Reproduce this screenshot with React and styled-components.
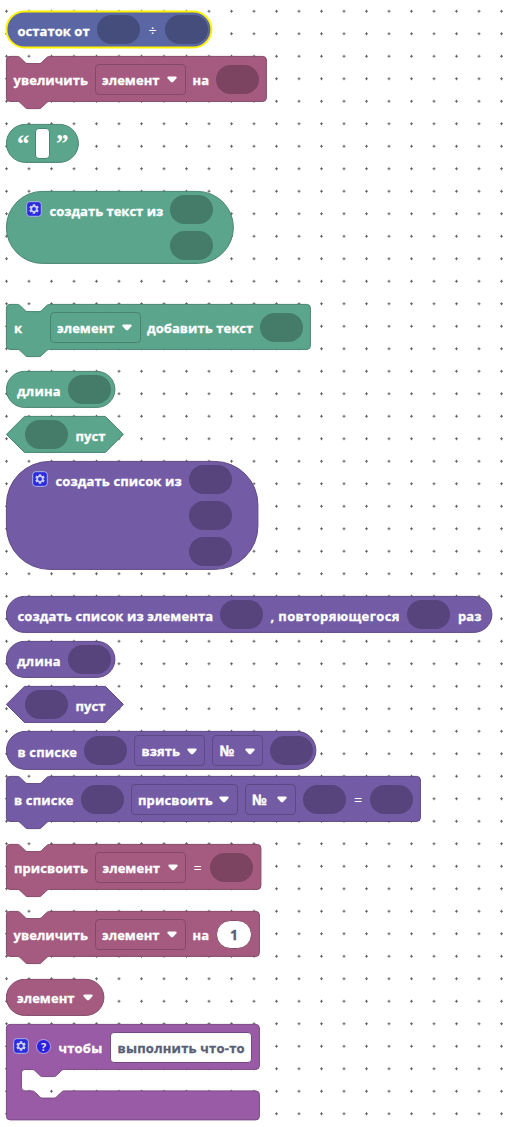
import React from "react";
import styled, { createGlobalStyle } from "styled-components";

const Global = createGlobalStyle`
  body { margin: 0; background: #fff; }
  * { box-sizing: border-box; }
`;

const PALETTE = {
  math: { fill: "#5b67a5", edge: "#fff200", socket: "#444d7c" },
  text: { fill: "#5ba58c", edge: "#498470", socket: "#447c69" },
  list: { fill: "#745ba5", edge: "#5d4984", socket: "#57447c" },
  vars: { fill: "#a55b80", edge: "#844966", socket: "#7c4460" },
  proc: { fill: "#995ba5", edge: "#7a4984", socket: "#73447c" },
};

const Workspace = styled.main`
  position: relative;
  width: 516px;
  height: 1127px;
  overflow: hidden;
  padding: 11px 0 0 6px;
  display: flex;
  flex-direction: column;
  align-items: flex-start;
  font-family: "Open Sans", "Noto Sans", sans-serif;
  font-weight: 700;
  font-size: 13px;
  color: #fff;
`;

const GridLayer = styled.svg`
  position: absolute;
  inset: 0;
  width: 100%;
  height: 100%;
`;

const BlockBox = styled.section`
  position: relative;
  flex: none;
  width: ${(p) => p.$w}px;
  height: ${(p) => p.$h}px;
  margin-bottom: ${(p) => p.$after}px;
`;

const Outline = styled.svg`
  position: absolute;
  left: 0;
  top: 0;
  width: 100%;
  height: 100%;
  overflow: visible;
`;

const Row = styled.div`
  position: relative;
  display: flex;
  align-items: center;
  height: ${(p) => p.$h}px;
  padding-left: ${(p) => p.$pad}px;
`;

const Label = styled.span`
  flex: none;
  width: ${(p) => p.$w}px;
  margin-left: ${(p) => p.$gap || 0}px;
  font-size: ${(p) => p.$size || 13}px;
  line-height: 20px;
  padding-top: ${(p) => p.$drop ?? 1}px;
  letter-spacing: ${(p) => p.$ls ?? 0.05}px;
  -webkit-text-stroke: 0.3px currentColor;
  white-space: pre;
`;

const Operator = styled.span`
  flex: none;
  width: ${(p) => p.$w}px;
  margin-left: ${(p) => p.$gap}px;
  padding-top: ${(p) => p.$drop ?? 2}px;
  font-size: 14.4px;
  font-weight: 500;
  line-height: 20px;
`;

const Socket = styled.span`
  flex: none;
  width: 43px;
  height: 29px;
  margin-left: ${(p) => p.$gap || 0}px;
  border-radius: 14.5px;
  background: ${(p) => p.$color};
`;

const SocketStack = styled.div`
  display: flex;
  flex-direction: column;
  align-self: flex-start;
  gap: 7px;
  padding-top: 4px;
  margin-left: 7px;
`;

const DropBox = styled.span`
  flex: none;
  display: flex;
  align-items: center;
  justify-content: space-between;
  width: ${(p) => p.$w}px;
  height: 31px;
  margin-left: ${(p) => p.$gap}px;
  padding: 0 7.5px 0 6.5px;
  border: 1px solid ${(p) => p.$edge};
  border-radius: 4px;
`;

const Arrow = styled.svg`
  flex: none;
  width: 10px;
  height: 7px;
  margin-top: ${(p) => p.$top ?? 1}px;
  margin-left: ${(p) => p.$gap || 0}px;
`;

const TextField = styled.span`
  flex: none;
  display: flex;
  align-items: center;
  width: ${(p) => p.$w}px;
  height: ${(p) => p.$h || 30}px;
  margin-left: ${(p) => p.$gap}px;
  padding-left: ${(p) => p.$pad || 0}px;
  border: 1px solid ${(p) => p.$edge};
  border-radius: ${(p) => p.$r || 4}px;
  background: #fff;
  color: #575e75;
`;

const Quote = styled.span`
  flex: none;
  width: 12px;
  height: 34px;
  margin-left: ${(p) => p.$gap || 0}px;
  font: 700 25px/34px "Liberation Serif", serif;
  text-align: center;
`;

const IconBox = styled.svg`
  flex: none;
  width: 16px;
  height: 16px;
  margin-left: ${(p) => p.$gap || 0}px;
  margin-bottom: ${(p) => p.$up ?? 0}px;
`;

const K = 3.6;
const NOTCH_R = "c1.8,0 2.7,.9 3.6,1.8 l3.6,3.6 c.9,.9 1.8,1.8 3.6,1.8 h10.8 c1.8,0 2.7,-.9 3.6,-1.8 l3.6,-3.6 c.9,-.9 1.8,-1.8 3.6,-1.8";
const NOTCH_L = "c-1.8,0 -2.7,.9 -3.6,1.8 l-3.6,3.6 c-.9,.9 -1.8,1.8 -3.6,1.8 h-10.8 c-1.8,0 -2.7,-.9 -3.6,-1.8 l-3.6,-3.6 c-.9,-.9 -1.8,-1.8 -3.6,-1.8";

const shapes = {
  round: (w, h) => {
    const r = Math.min(h / 2, 43.2);
    return `M${r},0 H${w - r} a${r},${r} 0 0 1 ${r},${r} V${h - r} a${r},${r} 0 0 1 ${-r},${r} H${r} a${r},${r} 0 0 1 ${-r},${-r} V${r} a${r},${r} 0 0 1 ${r},${-r} z`;
  },
  hex: (w, h) => `M${h / 2},0 H${w - h / 2} L${w},${h / 2} L${w - h / 2},${h} H${h / 2} L0,${h / 2} z`,
  stack: (w, h) =>
    `M0,${K} a${K},${K} 0 0 1 ${K},${-K} H10.8 ${NOTCH_R} H${w - K} a${K},${K} 0 0 1 ${K},${K} V${h - K} a${K},${K} 0 0 1 ${-K},${K} H43.2 ${NOTCH_L} H${K} a${K},${K} 0 0 1 ${-K},${-K} z`,
  def: (w, h) =>
    `M0,${K} a${K},${K} 0 0 1 ${K},${-K} H${w - K} a${K},${K} 0 0 1 ${K},${K} V41.4 a${K},${K} 0 0 1 ${-K},${K} H58 ${NOTCH_L} H18.6 a${K},${K} 0 0 0 ${-K},${K} V62.9 a${K},${K} 0 0 0 ${K},${K} H25.6 ${NOTCH_R} H${w - K} a${K},${K} 0 0 1 ${K},${K} V${h - K} a${K},${K} 0 0 1 ${-K},${K} H${K} a${K},${K} 0 0 1 ${-K},${-K} z`,
};

function Block({ kind, shape, w, h, after, pad, rowH, selected, children }) {
  const c = PALETTE[kind];
  return (
    <BlockBox $w={w} $h={h} $after={after}>
      <Outline>
        <path
          transform="translate(.4 .4)"
          d={shapes[shape](w, h)}
          fill={c.fill}
          stroke={c.edge}
          strokeWidth={selected ? 2 : 1}
        />
      </Outline>
      <Row $h={rowH || h + 1} $pad={pad}>{children}</Row>
    </BlockBox>
  );
}

function DownArrow({ gap, top }) {
  return (
    <Arrow $gap={gap} $top={top} viewBox="0 0 10 7">
      <path d="M1.5,.5 H8.5 Q10.2,.7 9.4,2.2 L6.3,5.7 Q5,6.9 3.7,5.7 L.6,2.2 Q-.2,.7 1.5,.5z" fill="#fff" />
    </Arrow>
  );
}

function Dropdown({ kind, w, gap = 7, ls, size, children, tw }) {
  return (
    <DropBox $w={w} $gap={gap} $edge={PALETTE[kind].edge}>
      <Label $w={tw} $ls={ls} $size={size}>{children}</Label>
      <DownArrow />
    </DropBox>
  );
}

const TEETH = [0, 60, 120, 180, 240, 300];

function Gear({ gap, up }) {
  return (
    <IconBox $gap={gap} $up={up} viewBox="0 0 16 16">
      <rect x=".7" y=".7" width="14.6" height="14.6" rx="3" fill="#2b2bdc" stroke="#a9b4e8" strokeWidth="1" />
      <g fill="#c9cdf5">
        {TEETH.map((a) => (
          <rect key={a} x="6.7" y="3.2" width="2.6" height="2.4" rx=".4" transform={`rotate(${a} 8 8)`} />
        ))}
      </g>
      <circle cx="8" cy="8" r="2.7" fill="none" stroke="#c9cdf5" strokeWidth="1.5" />
    </IconBox>
  );
}

const HelpMark = styled.span`
  flex: none;
  width: 15px;
  height: 15px;
  margin-left: ${(p) => p.$gap}px;
  margin-bottom: ${(p) => p.$up}px;
  border: 1px solid #b9a4e4;
  border-radius: 50%;
  background: #2a1fe0;
  color: #e6e2fa;
  font-size: 11px;
  line-height: 13px;
  text-align: center;
`;

function Hole({ kind, gap = 7 }) {
  return <Socket $gap={gap} $color={PALETTE[kind].socket} />;
}

export default function App() {
  return (
    <>
      <Global />
      <Workspace>
        <GridLayer>
          <defs>
            <pattern id="dots" x="-4.75" y="0" width="22.5" height="22.5" patternUnits="userSpaceOnUse">
              <path d="M11.25,9.8 v3 M9.75,11.3 h3" stroke="#666" strokeWidth="1" />
            </pattern>
          </defs>
          <rect width="100%" height="100%" fill="url(#dots)" />
        </GridLayer>

        <Block kind="math" shape="round" w={205} h={36} after={9} pad={11.5} selected>
          <Label $w={72} $drop={3}>остаток от</Label>
          <Hole kind="math" gap={7.5} />
          <Operator $w={8} $gap={8.5} $drop={3}>÷</Operator>
          <Hole kind="math" gap={8} />
        </Block>

        <Block kind="vars" shape="stack" w={260} h={45} after={23} pad={7.5}>
          <Label $w={74}>увеличить</Label>
          <Dropdown kind="vars" w={91} tw={58}>элемент</Dropdown>
          <Label $w={16.5} $gap={7}>на</Label>
          <Hole kind="vars" />
        </Block>

        <Block kind="text" shape="round" w={72} h={38} after={29} pad={11}>
          <Quote>“</Quote>
          <TextField $w={15} $h={31} $gap={6} $edge={PALETTE.text.edge} />
          <Quote $gap={6}>”</Quote>
        </Block>

        <Block kind="text" shape="round" w={227} h={72} after={41} pad={20} rowH={37}>
          <Gear up={2} />
          <Label $w={113.5} $gap={7.5} $drop={3} $ls={0}>создать текст из</Label>
          <SocketStack>
            <Hole kind="text" gap={0} />
            <Hole kind="text" gap={0} />
          </SocketStack>
        </Block>

        <Block kind="text" shape="stack" w={304} h={45} after={22} pad={8}>
          <Label $w={8}>к</Label>
          <Dropdown kind="text" w={91} tw={58} gap={27.5}>элемент</Dropdown>
          <Label $w={106} $gap={6.5}>добавить текст</Label>
          <Hole kind="text" />
        </Block>

        <Block kind="text" shape="round" w={108.5} h={36} after={9} pad={11}>
          <Label $w={44} $drop={3} $ls={0.2}>длина</Label>
          <Hole kind="text" />
        </Block>

        <Block kind="text" shape="hex" w={117} h={36} after={9} pad={19}>
          <Hole kind="text" gap={0} />
          <Label $w={30} $gap={7.5} $drop={3}>пуст</Label>
        </Block>

        <Block kind="list" shape="round" w={251.5} h={108} after={27} pad={26} rowH={37}>
          <Gear up={2} />
          <Label $w={126.5} $gap={7.5} $drop={3} $ls={0.12}>создать список из</Label>
          <SocketStack>
            <Hole kind="list" gap={0} />
            <Hole kind="list" gap={0} />
            <Hole kind="list" gap={0} />
          </SocketStack>
        </Block>

        <Block kind="list" shape="round" w={485.5} h={36} after={9} pad={11.5}>
          <Label $w={195.5} $drop={3} $ls={0.12}>создать список из элемента</Label>
          <Hole kind="list" gap={7} />
          <Label $w={129} $gap={7.5} $drop={3} $ls={0.36}>, повторяющегося</Label>
          <Hole kind="list" gap={7.5} />
          <Label $w={23} $gap={8} $drop={3}>раз</Label>
        </Block>

        <Block kind="list" shape="round" w={108.5} h={36} after={9} pad={11}>
          <Label $w={44} $drop={3} $ls={0.2}>длина</Label>
          <Hole kind="list" />
        </Block>

        <Block kind="list" shape="hex" w={117} h={36} after={9} pad={19}>
          <Hole kind="list" gap={0} />
          <Label $w={30} $gap={7.5} $drop={3}>пуст</Label>
        </Block>

        <Block kind="list" shape="round" w={309.5} h={38} after={7} pad={11.5}>
          <Label $w={59.5} $drop={2} $ls={0.15}>в списке</Label>
          <Hole kind="list" />
          <Dropdown kind="list" w={71} tw={38}>взять</Dropdown>
          <Dropdown kind="list" w={51} tw={17} size={14.4}>№</Dropdown>
          <Hole kind="list" gap={6.5} />
        </Block>

        <Block kind="list" shape="stack" w={414} h={45} after={23} pad={8}>
          <Label $w={59.5} $ls={0.15}>в списке</Label>
          <Hole kind="list" />
          <Dropdown kind="list" w={107} tw={75} ls={0.15}>присвоить</Dropdown>
          <Dropdown kind="list" w={51} tw={17} size={14.4}>№</Dropdown>
          <Hole kind="list" />
          <Operator $w={8} $gap={8.5}>=</Operator>
          <Hole kind="list" gap={8} />
        </Block>

        <Block kind="vars" shape="stack" w={254.5} h={45} after={22} pad={8}>
          <Label $w={74}>присвоить</Label>
          <Dropdown kind="vars" w={91} tw={58}>элемент</Dropdown>
          <Operator $w={8} $gap={7.5}>=</Operator>
          <Hole kind="vars" gap={8.5} />
        </Block>

        <Block kind="vars" shape="stack" w={253} h={45} after={23} pad={7.5}>
          <Label $w={74}>увеличить</Label>
          <Dropdown kind="vars" w={91} tw={58}>элемент</Dropdown>
          <Label $w={16.5} $gap={7}>на</Label>
          <TextField $w={36} $h={29} $r={14.5} $gap={7} $pad={13} $edge={PALETTE.vars.edge}>
            <Label $w={8} $size={14}>1</Label>
          </TextField>
        </Block>

        <Block kind="vars" shape="round" w={97.5} h={36} after={9} pad={11}>
          <Label $w={58} $drop={1}>элемент</Label>
          <DownArrow gap={7.5} top={-1} />
        </Block>

        <Block kind="proc" shape="def" w={253} h={95.5} after={0} pad={7} rowH={46}>
          <Gear up={2} />
          <HelpMark $gap={7} $up={2}>?</HelpMark>
          <Label $w={44} $gap={7.5} $drop={2} $ls={0.2}>чтобы</Label>
          <TextField $w={142} $h={31} $gap={7.5} $pad={6.5} $edge={PALETTE.proc.edge}>
            <Label $w={127} $ls={0.22} $drop={2}>выполнить что-то</Label>
          </TextField>
        </Block>
      </Workspace>
    </>
  );
}
